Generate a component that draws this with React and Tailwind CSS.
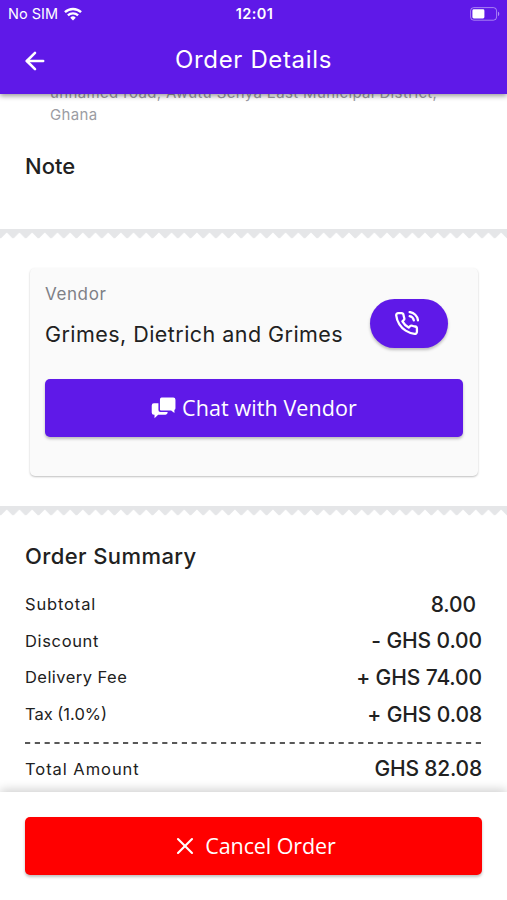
import { FiArrowLeft, FiPhoneCall, FiX } from "react-icons/fi";

const summary = [
  { label: "Subtotal", labelClass: "tracking-[0.85px]", value: "8.00", valueClass: "pr-1.5" },
  { label: "Discount", labelClass: "tracking-[0.65px]", value: "- GHS 0.00", valueClass: "" },
  { label: "Delivery Fee", labelClass: "tracking-[0.45px]", value: "+ GHS 74.00", valueClass: "" },
  { label: "Tax (1.0%)", labelClass: "tracking-[0px]", value: "+ GHS 0.08", valueClass: "" },
];

const WifiIcon = () => (
  <svg width="18" height="14" viewBox="0 0 19 14" fill="none" stroke="#fff" strokeWidth="2.5">
    <path d="M1 5.1a12.4 12.4 0 0 1 17 0" />
    <path d="M4.1 8.5a7.9 7.9 0 0 1 10.8 0" />
    <path d="M9.5 13.8 6.6 10.9a4.1 4.1 0 0 1 5.8 0z" fill="#fff" stroke="none" />
  </svg>
);

const BatteryIcon = () => (
  <svg width="31" height="14" viewBox="0 0 31 14" fill="none">
    <rect x="0.6" y="0.6" width="26" height="12.6" rx="3.2" stroke="#fff" strokeOpacity="0.45" />
    <rect x="2.4" y="2.3" width="12" height="9.2" rx="1.4" fill="#fff" />
    <path d="M28 4.8c1.7.5 1.7 3.7 0 4.2z" fill="#fff" fillOpacity="0.5" />
  </svg>
);

const ChatIcon = () => (
  <svg width="25" height="22" viewBox="0 0 26 23" fill="#fff">
    <path d="M11 .5h12.2A2.3 2.3 0 0 1 25.5 2.8v8.9a2.3 2.3 0 0 1-1.1 2v3l-3.4-2.7h-10.700a1 1 0 0 1-1-1V2.500A2 2 0 0 1 11 .5z" />
    <path d="M7.7 6.5H3A2.300 2.300 0 0 0 .7 8.800v7.400a2.300 2.300 0 0 0 2.300 2.300h.6v3.600l3.800-3.600h7.700a2.200 2.200 0 0 0 2.200-2.200v-.7H9.700a2 2 0 0 1-2-2z" />
  </svg>
);

const ZigZag = () => (
  <svg className="block w-full shrink-0" height="10" viewBox="0 0 507 10">
    <defs>
      <pattern id="teeth" width="12.675" height="10" patternUnits="userSpaceOnUse">
        <path d="M0 0H12.675V9.5L6.8 3.5L.8 9.5L0 8.7z" fill="#e5e6e8" />
      </pattern>
    </defs>
    <rect width="507" height="10" fill="url(#teeth)" />
  </svg>
);

const App = () => {
  return (
    <div className="flex h-[900px] w-[507px] flex-col overflow-hidden bg-white font-['Inter',sans-serif] text-[#212121]">
      {/* Header */}
      <header className="z-10 h-[94px] shrink-0 bg-[#5f19e8] text-white shadow-[0_2px_5px_rgba(0,0,0,0.4)]">
        <div className="grid h-7 grid-cols-3 items-center pl-[8px] pr-[6px]">
          <div className="flex items-center gap-1.5">
            <span className="text-[14.5px] leading-none">No SIM</span>
            <WifiIcon />
          </div>
          <span className="text-center text-[14.5px] font-semibold leading-none tracking-[0.4px]">12:01</span>
          <div className="flex justify-end">
            <BatteryIcon />
          </div>
        </div>
        <div className="grid h-16 grid-cols-[70px_1fr_70px] items-center">
          <button className="flex pl-[21px] pt-0.5">
            <FiArrowLeft size={28} strokeWidth={2.2} />
          </button>
          <h1 className="text-center text-[24px] tracking-[0.65px]">Order Details</h1>
        </div>
      </header>

      {/* Order */}
      <main className="flex min-h-0 flex-1 flex-col overflow-hidden">
        <p className="-mt-3 ml-[50px] text-[15px] leading-[22px] tracking-[0.36px] text-[#9b9ca3]">
          <span className="whitespace-nowrap">unnamed road, Awutu Senya East Municipal District,</span>
          <br />
          Ghana
        </p>
        <h2 className="ml-[25px] mt-6 text-[22px] font-medium leading-[32px]">Note</h2>
        <div className="mt-[47px] flex">
          <ZigZag />
        </div>

        {/* Vendor */}
        <section className="ml-[30px] mt-[29px] h-[208px] w-[448px] shrink-0 rounded-[5px] bg-[#fafafa] px-[15px] shadow-[0_1px_2px_rgba(0,0,0,0.25)]">
          <div className="flex h-[111px] justify-between pr-[15px]">
            <div className="pt-[15px]">
              <p className="text-[17px] leading-[22px] tracking-[0.6px] text-[#7e8086]">Vendor</p>
              <p className="mt-[13px] whitespace-nowrap text-[21.5px] leading-[32px] tracking-[0.45px]">Grimes, Dietrich and Grimes</p>
            </div>
            <button className="mt-[31px] flex h-[49px] w-[78px] shrink-0 items-center justify-center rounded-full bg-[#5f19e8] pr-[5px] text-white shadow-[0_2px_3px_rgba(0,0,0,0.25)]">
              <FiPhoneCall size={25} strokeWidth={2.2} />
            </button>
          </div>
          <button className="flex h-[58px] w-full items-center justify-center gap-1.5 rounded-[5px] bg-[#5f19e8] font-['Open_Sans',sans-serif] text-[21.5px] text-white shadow-[0_2px_3px_rgba(0,0,0,0.25)]">
            <ChatIcon />
            <span className="tracking-[0.1px]">Chat with Vendor</span>
          </button>
        </section>

        <div className="mt-[30px] flex">
          <ZigZag />
        </div>

        {/* Summary */}
        <section className="px-[25px]">
          <h2 className="mb-[14px] mt-6 text-[22px] font-medium leading-[32px] tracking-[0.4px]">Order Summary</h2>
          {summary.map((row) => (
            <div key={row.label} className="flex h-[36.7px] items-center justify-between">
              <span className={`text-[16.5px] ${row.labelClass}`}>{row.label}</span>
              <span className={`text-[21px] font-medium tracking-[-0.1px] ${row.valueClass}`}>{row.value}</span>
            </div>
          ))}
          <svg className="mt-[9px] block" width="457" height="2" viewBox="0 0 457 2">
            <path d="M0 1H457" stroke="#222" strokeWidth="1.4" strokeDasharray="5.2 4.6" />
          </svg>
          <div className="mt-[7px] flex h-[36.7px] items-center justify-between">
            <span className="text-[16.5px] tracking-[0.95px]">Total Amount</span>
            <span className="text-[21px] font-medium tracking-[-0.2px]">GHS 82.08</span>
          </div>
        </section>
      </main>

      {/* Footer */}
      <footer className="z-10 h-[108px] shrink-0 bg-white px-[25px] pt-[25px] shadow-[0_-2px_10px_rgba(0,0,0,0.2)]">
        <button className="flex h-[58px] w-full items-center justify-center gap-1.5 rounded-[5px] bg-[#ff0000] font-['Open_Sans',sans-serif] text-[21.5px] text-white shadow-[0_2px_3px_rgba(0,0,0,0.25)]">
          <FiX size={28} strokeWidth={1.8} />
          <span className="tracking-[-0.1px]">Cancel Order</span>
        </button>
      </footer>
    </div>
  );
};

export default App;
